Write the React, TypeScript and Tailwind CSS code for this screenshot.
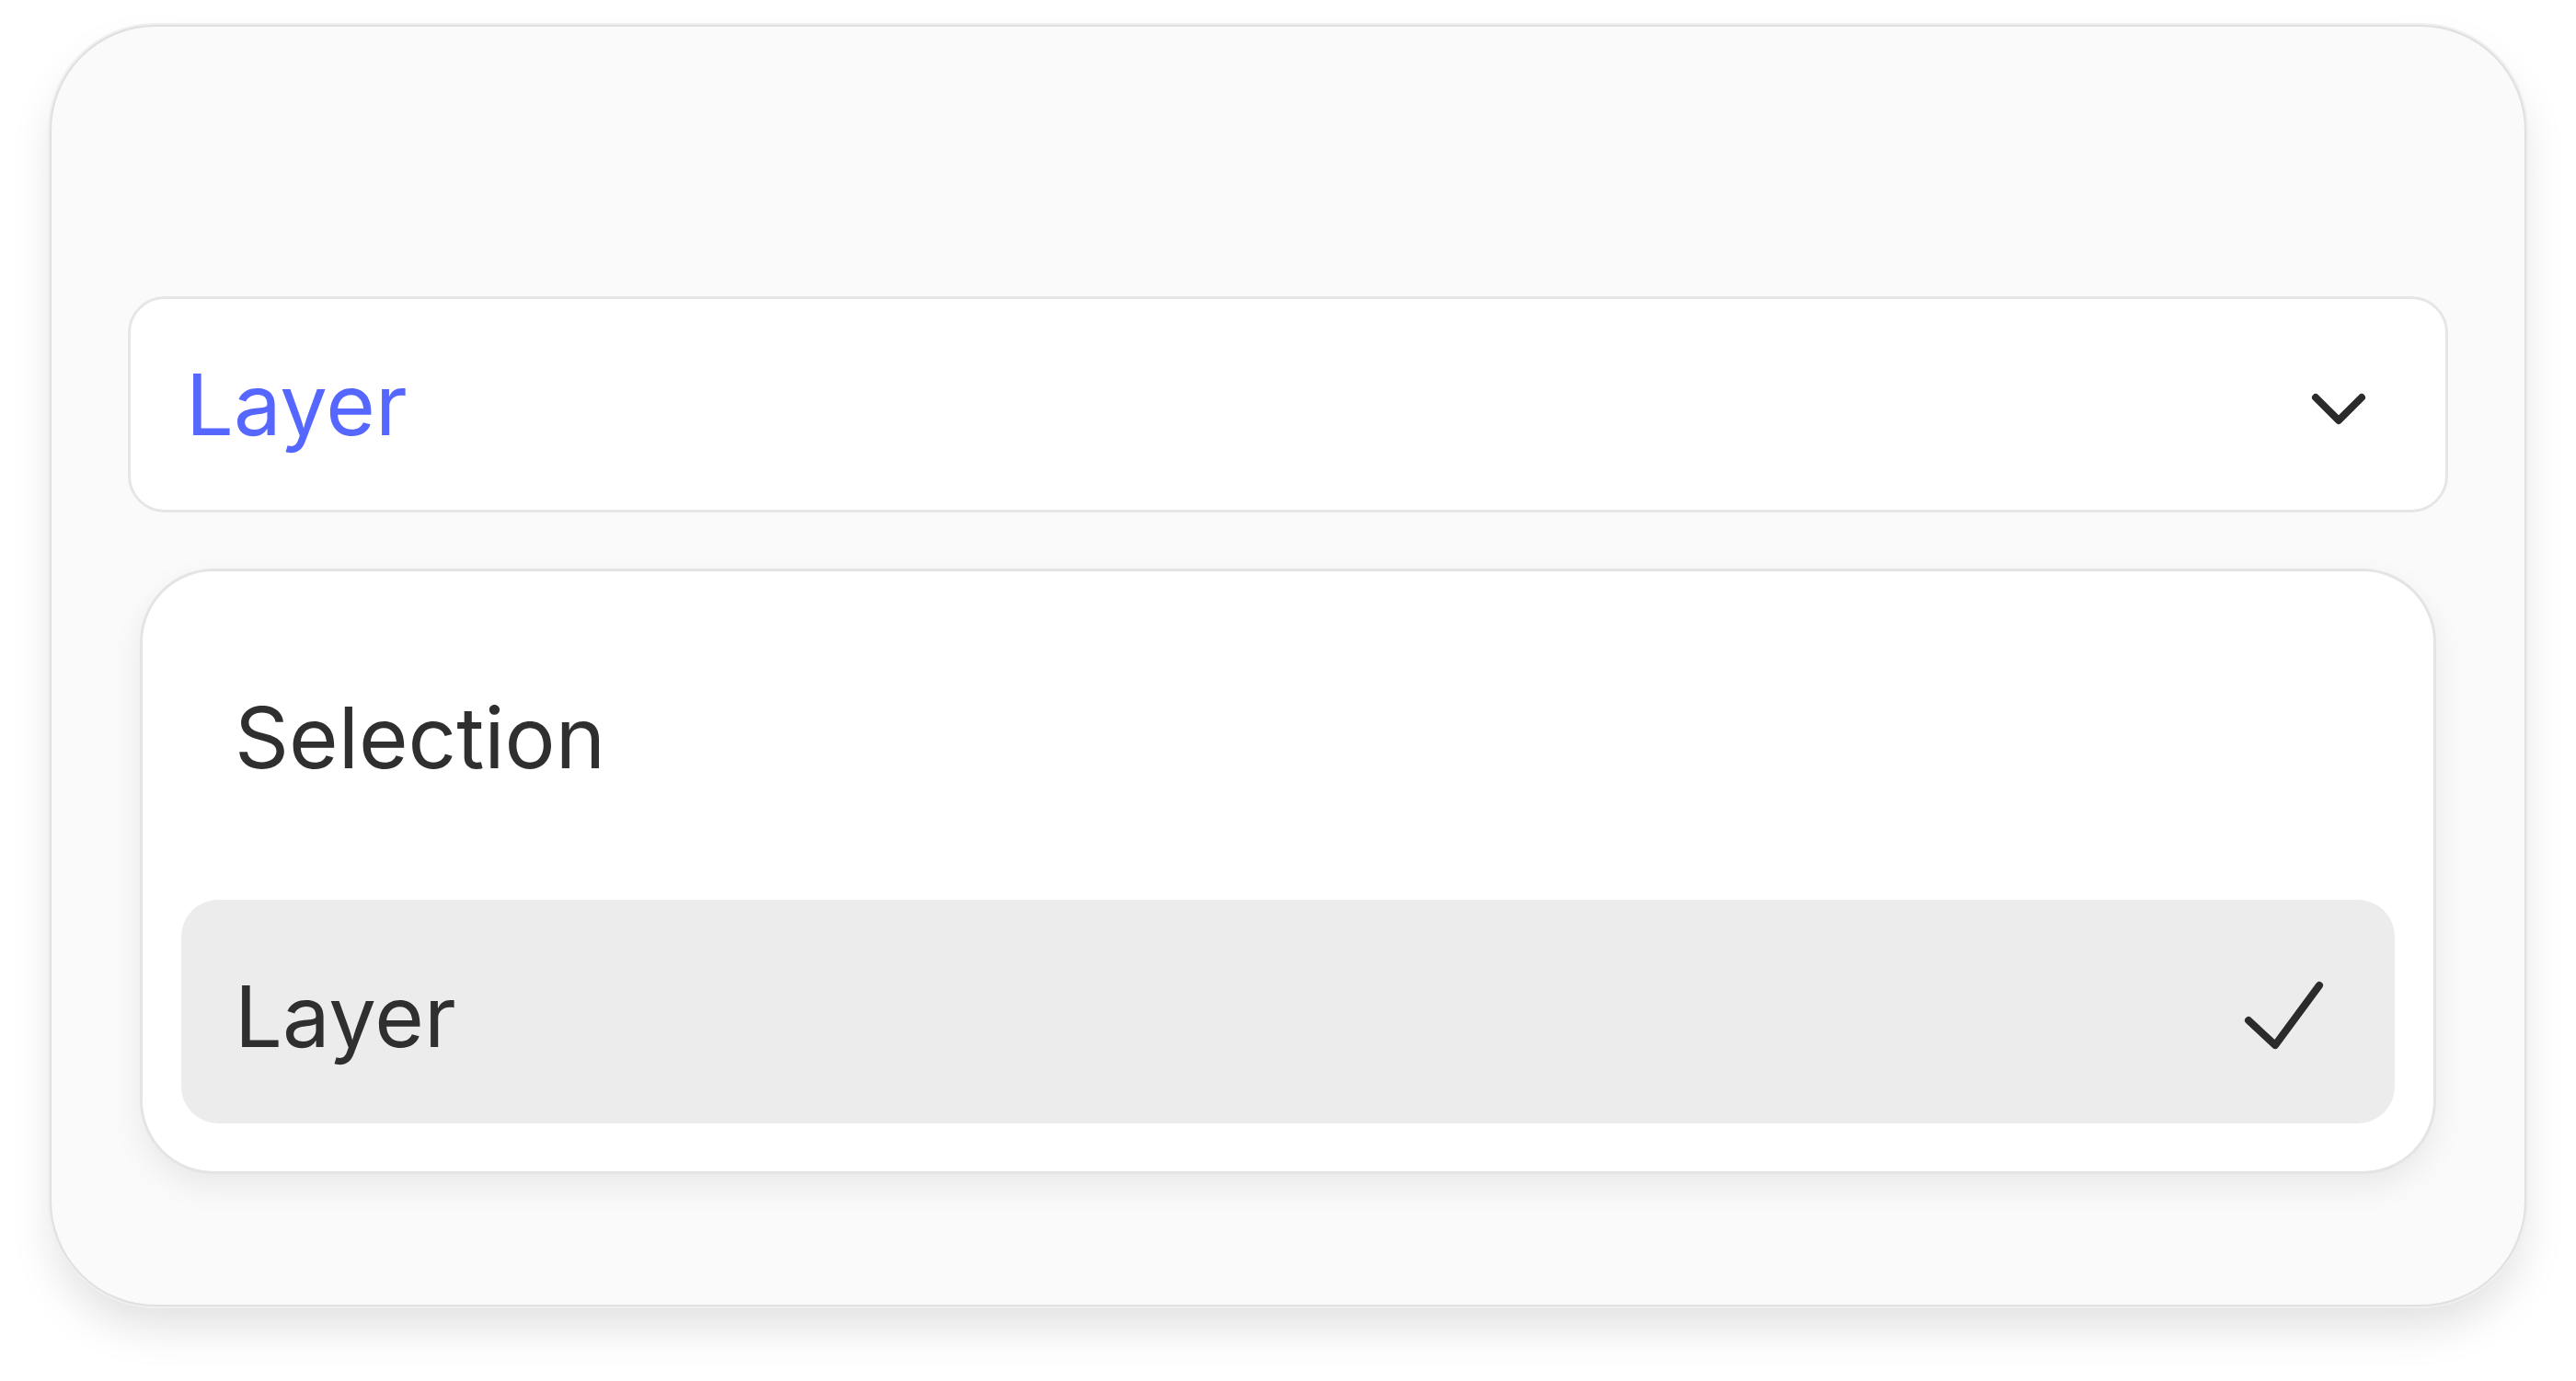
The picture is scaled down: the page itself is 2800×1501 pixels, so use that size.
import { useState } from "react";

const options = ["Selection", "Layer"];

const ChevronIcon = () => (
  <svg width="66" height="42" viewBox="0 0 66 42" fill="none" className="mt-[10px] shrink-0">
    <path
      d="M8 8 L33 33 L58 8"
      stroke="#2b2b2b"
      strokeWidth="8"
      strokeLinecap="round"
      strokeLinejoin="round"
    />
  </svg>
);

const CheckIcon = () => (
  <svg width="94" height="84" viewBox="0 0 94 84" fill="none" className="mt-[6px] shrink-0">
    <path
      d="M8 48 L37 75 L85 10"
      stroke="#2b2b2b"
      strokeWidth="8"
      strokeLinecap="round"
      strokeLinejoin="round"
    />
  </svg>
);

const App = () => {
  const [selected, setSelected] = useState("Layer");

  return (
    <div className="min-h-screen bg-white pt-[27px] font-['Inter','Noto_Sans',sans-serif]">
      <div className="mx-auto w-[2692px] h-[1393px] rounded-[115px] border-2 border-[#e0e0e0] bg-[#fafafa] px-[83px] pt-[293px] shadow-[0_0_0_2px_#efefef,0_26px_50px_-6px_rgba(0,0,0,0.13)]">
        {/* Trigger */}
        <button className="flex h-[235px] w-full items-center justify-between rounded-[40px] border-[3px] border-[#e6e6e6] bg-white pl-[60px] pr-[83px] text-left">
          <span className="text-[92px] leading-none text-[#5667ff]">{selected}</span>
          <ChevronIcon />
        </button>

        {/* Menu */}
        <div className="mx-[13px] mt-[61px] flex flex-col gap-[60px] rounded-[80px] border-[3px] border-[#e4e4e4] bg-white px-[42px] pt-[54px] pb-[52px] shadow-[0_14px_34px_rgba(0,0,0,0.07)]">
          {options.map((opt) => (
            <div
              key={opt}
              onClick={() => setSelected(opt)}
              className={
                opt === selected
                  ? "flex h-[243px] items-center justify-between rounded-[40px] bg-[#ececec] pl-[58px] pr-[73px]"
                  : "flex h-[243px] items-center justify-between rounded-[40px] pl-[58px] pr-[73px]"
              }
            >
              <span className="pt-[10px] text-[92px] leading-none text-[#2f2f2f]">{opt}</span>
              {opt === selected && <CheckIcon />}
            </div>
          ))}
        </div>
      </div>
    </div>
  );
};

export default App;
